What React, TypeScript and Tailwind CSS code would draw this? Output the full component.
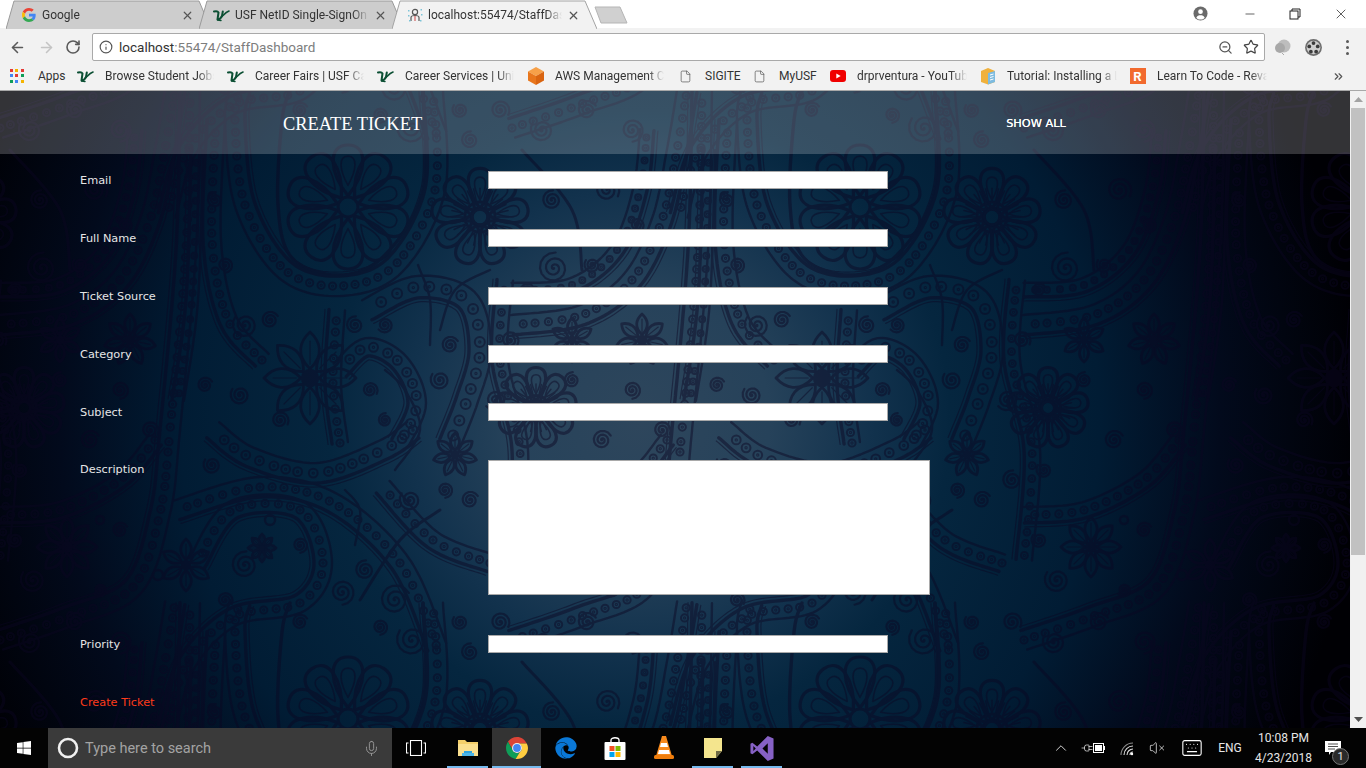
import React from 'react';
import { ArrowLeft, ArrowRight, RotateCw, Info, Star, ZoomOut, X, Minus, File, ChevronUp, Mic, VolumeX, Keyboard, ChevronsRight, Plug } from 'lucide-react';
import { FaEdge, FaWindows } from 'react-icons/fa';

type Pt = [number, number];

// Catmull-Rom sampling so the paisley bands can be given as a few through-points
const sample = (pts: Pt[], step = 8): Pt[] => {
  const out: Pt[] = [];
  for (let i = 0; i < pts.length - 1; i++) {
    const p0 = pts[Math.max(i - 1, 0)];
    const p1 = pts[i];
    const p2 = pts[i + 1];
    const p3 = pts[Math.min(i + 2, pts.length - 1)];
    const n = Math.max(2, Math.ceil(Math.hypot(p2[0] - p1[0], p2[1] - p1[1]) / step));
    for (let j = 0; j < n; j++) {
      const t = j / n;
      const f = (a: number, b: number, c: number, d: number) =>
        0.5 * (2 * b + (c - a) * t + (2 * a - 5 * b + 4 * c - d) * t * t + (3 * b - a - 3 * c + d) * t * t * t);
      out.push([f(p0[0], p1[0], p2[0], p3[0]), f(p0[1], p1[1], p2[1], p3[1])]);
    }
  }
  out.push(pts[pts.length - 1]);
  return out;
};

const toD = (pts: Pt[]) => 'M' + pts.map((p) => `${p[0].toFixed(1)} ${p[1].toFixed(1)}`).join('L');

const offset = (pts: Pt[], w: number): Pt[] =>
  pts.map((p, i) => {
    const a = pts[Math.max(i - 1, 0)];
    const b = pts[Math.min(i + 1, pts.length - 1)];
    const dx = b[0] - a[0];
    const dy = b[1] - a[1];
    const l = Math.hypot(dx, dy) || 1;
    return [p[0] - (dy / l) * w, p[1] + (dx / l) * w] as Pt;
  });

const Band = ({ pts, w = 10, r = 3.6, gap = 10 }: { pts: Pt[]; w?: number; r?: number; gap?: number }) => {
  const line = sample(pts, 4);
  const beads: Pt[] = [];
  let run = 0;
  for (let i = 1; i < line.length; i++) {
    run += Math.hypot(line[i][0] - line[i - 1][0], line[i][1] - line[i - 1][1]);
    if (run >= gap) {
      beads.push(line[i]);
      run = 0;
    }
  }
  return (
    <g>
      <path d={toD(offset(line, w))} strokeWidth={3.4} />
      <path d={toD(offset(line, -w))} strokeWidth={2.4} />
      <path d={toD(offset(line, w + 4))} strokeWidth={1.2} />
      {beads.map((b, i) => (
        <g key={i}>
          <circle cx={b[0]} cy={b[1]} r={r} strokeWidth={2} />
          <circle cx={b[0]} cy={b[1]} r={1.1} strokeWidth={1.2} />
        </g>
      ))}
    </g>
  );
};

const Line = ({ pts, w = 2.4 }: { pts: Pt[]; w?: number }) => <path d={toD(sample(pts, 5))} strokeWidth={w} />;

const Spiral = ({ x, y, r = 10, a = 0 }: { x: number; y: number; r?: number; a?: number }) => {
  const p: Pt[] = [];
  for (let t = 0; t < 40; t++) {
    const th = a + t * 0.42;
    const rr = (r * t) / 40;
    p.push([x + Math.cos(th) * rr, y + Math.sin(th) * rr]);
  }
  return <path d={toD(p)} strokeWidth={2.2} />;
};

const PetalFlower = ({ x, y, r, n = 10 }: { x: number; y: number; r: number; n?: number }) => (
  <g transform={`translate(${x} ${y})`}>
    {Array.from({ length: n }).map((_, i) => (
      <g key={i} transform={`rotate(${(360 / n) * i})`}>
        <path
          d={`M0 ${-r * 0.18}C${-r * 0.3} ${-r * 0.55} ${-r * 0.34} ${-r} 0 ${-r}C${r * 0.34} ${-r} ${r * 0.3} ${-r * 0.55} 0 ${-r * 0.18}Z`}
          strokeWidth={3.2}
        />
        <path
          d={`M0 ${-r * 0.35}C${-r * 0.14} ${-r * 0.6} ${-r * 0.16} ${-r * 0.82} 0 ${-r * 0.82}C${r * 0.16} ${-r * 0.82} ${r * 0.14} ${-r * 0.6} 0 ${-r * 0.35}Z`}
          strokeWidth={1.6}
        />
      </g>
    ))}
    <circle r={r * 0.16} strokeWidth={3} />
  </g>
);

const LeafFlower = ({ x, y, r, n = 8 }: { x: number; y: number; r: number; n?: number }) => (
  <g transform={`translate(${x} ${y})`}>
    {Array.from({ length: n }).map((_, i) => (
      <g key={i} transform={`rotate(${(360 / n) * i})`}>
        <path d={`M0 ${-r * 0.2}C${-r * 0.32} ${-r * 0.5} ${-r * 0.22} ${-r * 0.8} 0 ${-r}C${r * 0.22} ${-r * 0.8} ${r * 0.32} ${-r * 0.5} 0 ${-r * 0.2}Z`} strokeWidth={2.8} />
        <path d={`M0 ${-r * 0.3}L0 ${-r * 0.8}`} strokeWidth={1.2} />
      </g>
    ))}
    <circle r={r * 0.2} fill="rgb(12,6,34)" stroke="none" />
  </g>
);

const Sun = ({ x, y, r }: { x: number; y: number; r: number }) => (
  <g transform={`translate(${x} ${y})`}>
    <circle r={r * 0.24} strokeWidth={4} />
    <circle r={r * 0.42} strokeWidth={3} />
    {Array.from({ length: 28 }).map((_, i) => (
      <path key={i} transform={`rotate(${(360 / 28) * i})`} d={`M0 ${-r * 0.48}L0 ${-r * 0.8}`} strokeWidth={1.5} />
    ))}
    <PetalFlower x={0} y={0} r={r * 1.35} n={9} />
  </g>
);

const fillSpirals: [number, number, number, number][] = [
  [30, 130, 12, 0], [75, 110, 10, 2], [120, 130, 12, 4], [40, 200, 10, 1], [95, 190, 13, 3], [125, 225, 8, 5],
  [15, 290, 7, 2], [80, 265, 8, 0], [215, 200, 8, 1], [225, 265, 8, 4], [205, 385, 8, 2], [240, 395, 10, 0],
  [280, 420, 9, 3], [355, 325, 9, 1], [385, 325, 8, 5], [450, 345, 9, 2], [440, 380, 10, 0], [370, 390, 8, 3],
  [385, 420, 7, 1], [445, 490, 8, 4], [410, 500, 11, 0], [470, 500, 9, 2], [500, 480, 10, 1], [510, 340, 9, 3],
  [495, 400, 11, 5], [20, 470, 8, 0], [90, 440, 10, 2], [120, 390, 9, 4], [60, 380, 8, 1], [225, 600, 8, 3],
  [365, 570, 10, 1], [300, 545, 8, 4], [120, 530, 8, 2], [15, 540, 8, 0], [100, 590, 7, 5], [470, 140, 9, 1],
  [500, 110, 10, 3], [460, 110, 8, 0], [300, 110, 8, 2], [380, 115, 8, 4],
];

// one 512px repeat of the wallpaper, in page coordinates
const PaisleyTile = () => (
  <g fill="none" stroke="rgb(12,6,34)" strokeLinecap="round" strokeLinejoin="round">
    <PetalFlower x={348} y={207} r={62} />
    <Line pts={[[423, 91], [423, 190], [385, 255], [340, 275], [292, 258], [278, 205], [282, 120], [290, 91]]} w={3.4} />
    <Band pts={[[433, 91], [435, 190], [395, 265], [340, 286], [285, 270], [245, 205], [235, 120], [240, 91]]} />
    <Sun x={480} y={217} r={36} />
    <LeafFlower x={310} y={378} r={46} />
    <Sun x={24} y={408} r={30} />
    <LeafFlower x={67} y={547} r={30} />
    <LeafFlower x={130} y={340} r={26} n={7} />
    <LeafFlower x={262} y={548} r={14} />
    <LeafFlower x={186} y={565} r={26} n={6} />
    <LeafFlower x={60} y={340} r={22} n={6} />
    <LeafFlower x={455} y={455} r={22} n={7} />
    <Band pts={[[0, 325], [70, 315], [120, 280], [150, 220], [165, 150], [175, 91]]} />
    <Band pts={[[0, 290], [60, 285], [105, 250], [128, 190], [135, 130]]} w={7} r={3} gap={9} />
    <Band pts={[[190, 91], [186, 250], [170, 430], [160, 513], [133, 587], [67, 617], [0, 640]]} />
    <Band pts={[[0, 515], [60, 510], [120, 480], [155, 440]]} w={8} />
    <Band pts={[[177, 510], [260, 487], [333, 503], [400, 563], [437, 647]]} />
    <Band pts={[[197, 563], [233, 510], [300, 510], [323, 563], [300, 603], [233, 617], [187, 663], [167, 727]]} w={9} />
    <Band pts={[[213, 430], [250, 457], [317, 473], [383, 450], [413, 430]]} r={4.4} gap={12} />
    <Band pts={[[383, 487], [433, 540], [490, 563]]} w={9} />
    <Band pts={[[367, 310], [417, 287], [467, 300], [480, 350], [467, 400], [450, 443]]} r={5} gap={15} w={11} />
    <Band pts={[[340, 370], [367, 347], [400, 363], [417, 403], [400, 443]]} r={4.5} gap={12} w={9} />
    <Band pts={[[337, 310], [333, 383], [340, 443]]} w={8} />
    <Band pts={[[216, 120], [212, 240], [228, 320], [262, 360]]} w={9} />
    <Band pts={[[197, 150], [192, 300], [178, 400]]} w={6} r={3} gap={10} />
    <Band pts={[[505, 280], [500, 360], [520, 450], [512, 560]]} w={8} r={3.4} />
    <Line pts={[[440, 330], [455, 290], [490, 270]]} />
    <Line pts={[[430, 345], [430, 300], [418, 265]]} />
    <Line pts={[[395, 470], [420, 430], [405, 390], [385, 370]]} />
    <Line pts={[[355, 545], [360, 510], [345, 490]]} />
    <Line pts={[[10, 150], [60, 210], [70, 270]]} w={3} />
    <Line pts={[[360, 600], [400, 540], [440, 510]]} w={3} />
    <Spiral x={245} y={325} r={13} />
    <Spiral x={270} y={320} r={9} a={2} />
    <Spiral x={42} y={268} r={16} a={1} />
    <Spiral x={33} y={580} r={13} />
    <Spiral x={395} y={600} r={16} a={2} />
    <Spiral x={342} y={592} r={13} a={4} />
    <Spiral x={245} y={565} r={14} a={1} />
    <Spiral x={212} y={465} r={9} />
    <Spiral x={150} y={430} r={9} a={3} />
    <Spiral x={412} y={640} r={16} />
    {fillSpirals.map(([x, y, r, a], i) => (
      <Spiral key={i} x={x} y={y} r={r} a={a} />
    ))}
    <circle cx={270} cy={520} r={5} strokeWidth={2.4} />
    <circle cx={158} cy={575} r={5} strokeWidth={2.4} />
    <circle cx={100} cy={520} r={4} strokeWidth={2.4} />
  </g>
);

const PaisleyWall = () => {
  const offsets = [-512, 0, 512, 1024];
  return (
    <svg className="absolute inset-0 h-full w-full" viewBox="0 91 1350 637" preserveAspectRatio="none" opacity={0.45}>
      <defs>
        <g id="tile">
          <PaisleyTile />
        </g>
      </defs>
      {offsets.map((dx) => [-512, 0, 512].map((dy) => <use key={`${dx}_${dy}`} href="#tile" x={dx} y={dy} />))}
    </svg>
  );
};

const UsfIcon = () => (
  <svg viewBox="0 0 17 14" className="h-[14px] w-[17px]" fill="none" stroke="#0b4f33" strokeLinecap="round" strokeLinejoin="round">
    <path d="M1 3.500C3 3 5 3.500 5.500 4.500L4.500 11.500C6.500 11.500 8 10 9 8L9.800 3.500" strokeWidth="2" />
    <path d="M9 8.500C11 6.500 13 4 16 3" strokeWidth="1.600" />
    <path d="M4.500 12L8 12.500" strokeWidth="1.400" />
  </svg>
);

const GoogleIcon = () => (
  <svg viewBox="0 0 48 48" className="h-[14px] w-[14px]">
    <path fill="#EA4335" d="M24 9.5c3.5 0 6.7 1.3 9.2 3.6l6.9-6.9C35.9 2.4 30.4 0 24 0 14.6 0 6.5 5.4 2.6 13.2l8 6.2C12.5 13.7 17.8 9.5 24 9.5z" />
    <path fill="#4285F4" d="M46.9 24.5c0-1.6-.1-3.1-.4-4.5H24v9h12.9c-.6 3-2.2 5.5-4.8 7.2l7.7 6c4.500-4.200 7.100-10.300 7.100-17.700z" />
    <path fill="#FBBC05" d="M10.500 28.600c-.5-1.400-.8-3-.8-4.600s.3-3.200.8-4.600l-8-6.200C.9 16.500 0 20.100 0 24s.9 7.500 2.600 10.800l7.900-6.200z" />
    <path fill="#34A853" d="M24 48c6.500 0 11.900-2.100 15.900-5.800l-7.700-6c-2.200 1.400-4.900 2.300-8.200 2.300-6.200 0-11.500-4.200-13.400-9.900l-8 6.200C6.500 42.600 14.600 48 24 48z" />
  </svg>
);

const LocalFavicon = () => (
  <svg viewBox="0 0 16 16" className="h-[16px] w-[16px]">
    <circle cx="8" cy="5" r="2.6" fill="none" stroke="#555" strokeWidth="1.2" />
    <path d="M4 14V10.500C4 9 6 8.500 8 8.500S12 9 12 10.500V14" fill="none" stroke="#555" strokeWidth="1.2" />
    <path d="M8 9V14" stroke="#c44" strokeWidth="1" />
    <g fill="#7cc4d8">
      <rect x="1" y="3" width="1.500" height="1.500" />
      <rect x="13.500" y="2" width="1.500" height="1.500" />
      <rect x="1" y="8" width="1.500" height="1.500" />
      <rect x="14" y="7" width="1.500" height="1.500" />
      <rect x="2" y="13" width="1.500" height="1.500" />
      <rect x="13" y="13" width="1.500" height="1.500" />
    </g>
  </svg>
);

const ChromeIcon = ({ size = 24 }: { size?: number }) => (
  <svg viewBox="0 0 48 48" width={size} height={size}>
    <path fill="#DB4437" d="M24 2C16.500 2 9.800 5.800 5.900 11.600L14 25.500C14.700 20.300 18.900 15 24 15H43.500C39.900 7.400 32.600 2 24 2Z" />
    <path fill="#0F9D58" d="M5.900 11.600C3.400 15.300 2 19.500 2 24C2 35.200 10.400 44.500 21.300 45.800L29.400 32.500C27.800 33.400 25.900 34 24 34C19 34 14.900 30.300 14 25.500Z" />
    <path fill="#FFCD40" d="M43.500 15H24C29.500 15 34 19.500 34 24C34 27.200 32.200 30.800 29.400 32.500L21.300 45.800C22.200 45.900 23.100 46 24 46C36.200 46 46 36.200 46 24C46 20.800 45.100 17.700 43.500 15Z" />
    <circle cx="24" cy="24" r="10" fill="#f1f1f1" />
    <circle cx="24" cy="24" r="7.800" fill="#4285F4" />
  </svg>
);

const tabs = [
  { title: 'Google', icon: <GoogleIcon />, pad: 'pl-[14px]', gap: 'ml-[5px]' },
  { title: 'USF NetID Single-SignOn', icon: <UsfIcon />, pad: 'pl-[14px]', gap: 'ml-[5px]' },
  { title: 'localhost:55474/StaffDashboard', icon: <LocalFavicon />, pad: 'pl-[14px]', gap: 'ml-[5px]', active: true },
];

const TabStrip = () => (
  <div className="flex h-[28px] items-end bg-white pl-[6px]">
    {tabs.map((t, i) => (
      <div key={t.title} className={`relative flex h-[28px] w-[205px] items-center pt-[2px] ${t.pad} ${i > 0 ? '-ml-[12px]' : ''} ${t.active ? 'z-10' : ''}`}>
        <svg className="absolute inset-0" width="205" height="29" viewBox="0 0 205 29">
          <path d="M0 29L8 1H193L205 29" fill={t.active ? '#f2f2f2' : '#cdcdcd'} stroke={t.active ? '#a3a3a3' : '#9a9a9a'} strokeWidth="1" />
        </svg>
        <div className="relative flex w-[17px] shrink-0 justify-center">{t.icon}</div>
        <span className={`relative ${t.gap} w-[134px] overflow-hidden whitespace-nowrap text-[12px] text-[#333] [mask-image:linear-gradient(to_right,black_88%,transparent)]`}>{t.title}</span>
        <X className="relative ml-[5px] h-[13px] w-[13px] text-[#555]" strokeWidth={2.200} />
      </div>
    ))}
    <svg width="36" height="19" viewBox="0 0 36 19" className="mb-[3px] -ml-[4px]">
      <path d="M2 1H27L34 17H8Z" fill="#d0d0d0" stroke="#b5b5b5" />
    </svg>
    <div className="ml-auto flex h-full items-center pb-[1px]">
      <svg viewBox="0 0 16 16" className="mr-[34px] h-[15px] w-[15px]">
        <circle cx="8" cy="8" r="7.500" fill="#6a6a6a" />
        <circle cx="8" cy="6" r="2.500" fill="#fff" />
        <path d="M3.500 12.500C4.500 10.300 6 9.800 8 9.800S11.500 10.300 12.500 12.500C11.500 13.800 10 14.500 8 14.500S4.500 13.800 3.500 12.500Z" fill="#fff" />
      </svg>
      <Minus className="mr-[31px] h-[14px] w-[16px] text-[#222]" strokeWidth={1.200} />
      <svg viewBox="0 0 12 12" className="mr-[32px] h-[12px] w-[12px]" fill="none" stroke="#222">
        <path d="M3 3V1H11V9H9" />
        <rect x="1" y="3" width="8" height="8" />
      </svg>
      <X className="mr-[17px] h-[16px] w-[16px] text-[#222]" strokeWidth={1.100} />
    </div>
  </div>
);

const Toolbar = () => (
  <div className="flex h-[34px] items-center bg-[#f2f2f2] pl-[9px] pt-[4px]">
    <ArrowLeft className="h-[17px] w-[17px] text-[#5a5a5a]" strokeWidth={2.200} />
    <ArrowRight className="ml-[12px] h-[17px] w-[17px] text-[#c4c4c4]" strokeWidth={2.200} />
    <RotateCw className="ml-[10px] h-[16px] w-[16px] text-[#5a5a5a]" strokeWidth={2.400} />
    <div className="ml-[11px] flex h-[28px] w-[1173px] items-center rounded-[2px] border border-[#a9a9a9] bg-white pl-[6px]">
      <Info className="h-[14px] w-[14px] text-[#555]" strokeWidth={2} />
      <span className="ml-[6px] whitespace-nowrap text-[13.5px] text-[#333]">
        localhost<span className="text-[#7d7d7d]">:55474/StaffDashboard</span>
      </span>
      <ZoomOut className="ml-auto h-[15px] w-[15px] text-[#555]" strokeWidth={2} />
      <Star className="ml-[10px] mr-[5px] h-[16px] w-[16px] text-[#444]" strokeWidth={1.800} />
    </div>
    <svg viewBox="0 0 18 18" className="ml-[9px] h-[18px] w-[18px]">
      <circle cx="10" cy="8" r="6.500" fill="#bdbdbd" />
      <circle cx="6" cy="10" r="5" fill="#a8a8a8" />
      <path d="M8 15L10 17" stroke="#aaa" />
    </svg>
    <svg viewBox="0 0 18 18" className="ml-[12px] h-[19px] w-[19px]">
      <circle cx="9" cy="9" r="8" fill="#6e6e6e" />
      <circle cx="9" cy="9" r="6.500" fill="#cfcfcf" />
      <g fill="#3b3b3b">
        <circle cx="9" cy="4.800" r="1.800" />
        <circle cx="5" cy="8" r="1.800" />
        <circle cx="13" cy="8" r="1.800" />
        <circle cx="6.500" cy="13" r="1.800" />
        <circle cx="11.500" cy="13" r="1.800" />
      </g>
    </svg>
    <div className="ml-[23px] flex flex-col gap-[3px]">
      <span className="h-[3px] w-[3px] rounded-full bg-[#5a5a5a]" />
      <span className="h-[3px] w-[3px] rounded-full bg-[#5a5a5a]" />
      <span className="h-[3px] w-[3px] rounded-full bg-[#5a5a5a]" />
    </div>
  </div>
);

const AppsIcon = () => (
  <div className="grid h-[14px] w-[14px] grid-cols-3 gap-[2px]">
    {['#e53935', '#f4b400', '#e53935', '#4285f4', '#e53935', '#0f9d58', '#0f9d58', '#4285f4', '#f4b400'].map((c, i) => (
      <svg key={i} viewBox="0 0 4 4" className="h-[3px] w-[3px]">
        <rect width="4" height="4" fill={c} />
      </svg>
    ))}
  </div>
);

const CubeIcon = () => (
  <svg viewBox="0 0 16 18" className="h-[18px] w-[16px]">
    <path d="M8 0L16 4.500L8 9L0 4.500Z" fill="#f7a048" />
    <path d="M0 4.500L8 9V18L0 13.500Z" fill="#e8761c" />
    <path d="M16 4.500L8 9V18L16 13.500Z" fill="#d96410" />
  </svg>
);

const YouTubeIcon = () => (
  <svg viewBox="0 0 16 12" className="h-[12px] w-[16px]">
    <rect width="16" height="12" rx="3" fill="#f00000" />
    <path d="M6.300 3.500L10.700 6L6.300 8.500Z" fill="#fff" />
  </svg>
);

const BoxIcon = () => (
  <svg viewBox="0 0 16 18" className="h-[18px] w-[16px]">
    <path d="M1 4L8 1L15 4V15L8 17.500L1 15Z" fill="#f0b13c" />
    <path d="M8 6L15 4V15L8 17.500Z" fill="#7dbbe0" />
    <path d="M10 8L13.500 7M10 10.500L13.500 9.500M10 13L13.500 12" stroke="#fff" strokeWidth="1" />
  </svg>
);

const bookmarks: { label: string; icon: React.ReactNode; w: string; text: string; fade?: boolean }[] = [
  { label: 'Browse Student Jobs', icon: <UsfIcon />, w: 'w-[150px]', text: 'w-[109px]', fade: true },
  { label: 'Career Fairs | USF Career Services', icon: <UsfIcon />, w: 'w-[150px]', text: 'w-[109px]', fade: true },
  { label: 'Career Services | University', icon: <UsfIcon />, w: 'w-[150px]', text: 'w-[109px]', fade: true },
  { label: 'AWS Management Console', icon: <CubeIcon />, w: 'w-[150px]', text: 'w-[109px]', fade: true },
  { label: 'SIGITE', icon: <File className="h-[15px] w-[13px] text-[#555]" strokeWidth={1.300} />, w: 'w-[74px]', text: 'w-[40px]' },
  { label: 'MyUSF', icon: <File className="h-[15px] w-[13px] text-[#555]" strokeWidth={1.300} />, w: 'w-[78px]', text: 'w-[40px]' },
  { label: 'drprventura - YouTube', icon: <YouTubeIcon />, w: 'w-[150px]', text: 'w-[110px]', fade: true },
  { label: 'Tutorial: Installing a LAMP', icon: <BoxIcon />, w: 'w-[150px]', text: 'w-[110px]', fade: true },
  {
    label: 'Learn To Code - Revature',
    icon: <span className="flex h-[16px] w-[16px] items-center justify-center bg-[#f26a2e] text-[13px] font-bold leading-none text-white">R</span>,
    w: 'w-[150px]',
    text: 'w-[110px]',
    fade: true,
  },
];

const BookmarkBar = () => (
  <div className="flex h-[29px] items-center border-b border-[#a8a8a8] bg-[#f2f2f2] pl-[10px] text-[12px] text-[#333]">
    <div className="flex w-[67px] items-center">
      <AppsIcon />
      <span className="ml-[14px]">Apps</span>
    </div>
    {bookmarks.map((b) => (
      <div key={b.label} className={`flex items-center ${b.w}`}>
        <div className="flex w-[17px] shrink-0 justify-center">{b.icon}</div>
        <span className={`ml-[11px] overflow-hidden whitespace-nowrap ${b.text} ${b.fade ? '[mask-image:linear-gradient(to_right,black_85%,transparent)]' : ''}`}>{b.label}</span>
      </div>
    ))}
    <ChevronsRight className="ml-[53px] h-[13px] w-[13px] text-[#555]" strokeWidth={2.200} />
  </div>
);

const fields = ['Email', 'Full Name', 'Ticket Source', 'Category', 'Subject'];

const Field = ({ label }: { label: string }) => (
  <div className="flex h-[58px] items-start">
    <label className="w-[408px] pt-[2px] leading-[16px]">{label}</label>
    <input className="h-[18px] w-[400px] border border-[#a9a9a9] bg-white" />
  </div>
);

const TicketForm = () => (
  <div className="relative pl-[80px] pt-[17px] text-[11.3px] text-[#e6e6e6] [font-family:'DejaVu_Sans',Verdana,sans-serif]">
    {fields.map((f) => (
      <Field key={f} label={f} />
    ))}
    <div className="flex h-[174px] items-start">
      <label className="w-[408px] pt-[1px] leading-[16px]">Description</label>
      <textarea className="-mt-[1px] h-[135px] w-[442px] resize-none border border-[#a9a9a9] bg-white" />
    </div>
    <Field label="Priority" />
    <a className="block pt-[2px] leading-[16px] text-[#ff3b1a]">Create Ticket</a>
  </div>
);

const Scrollbar = () => (
  <div className="flex w-[16px] flex-col items-center bg-[#f1f1f1]">
    <svg viewBox="0 0 9 5" className="mt-[6px] h-[5px] w-[9px]">
      <path d="M4.500 0L9 5H0Z" fill="#a3a3a3" />
    </svg>
    <div className="mt-[6px] h-[447px] w-[14px] bg-[#c1c1c1]" />
    <svg viewBox="0 0 9 5" className="mb-[6px] mt-auto h-[5px] w-[9px]">
      <path d="M0 0H9L4.500 5Z" fill="#505050" />
    </svg>
  </div>
);

const Folder = () => (
  <svg viewBox="0 0 22 20" className="h-[20px] w-[22px]">
    <path d="M1 2H8L10 4H21V18H1Z" fill="#f4cf6a" />
    <path d="M1 6H21V18H1Z" fill="#fbe08f" />
    <path d="M7 18V13H15V18H13V15H9V18Z" fill="#2ea3e0" />
    <rect x="5" y="15" width="12" height="3" fill="#4db5e8" />
  </svg>
);

const StoreIcon = () => (
  <svg viewBox="0 0 22 24" className="h-[24px] w-[22px]">
    <path d="M7 6V4C7 1 15 1 15 4V6" fill="none" stroke="#fff" strokeWidth="1.300" />
    <rect x="0.500" y="6" width="21" height="18" rx="1" fill="#fff" />
    <rect x="5.500" y="10" width="5" height="5" fill="#f25022" />
    <rect x="11.500" y="10" width="5" height="5" fill="#7fba00" />
    <rect x="5.500" y="16" width="5" height="5" fill="#00a4ef" />
    <rect x="11.500" y="16" width="5" height="5" fill="#ffb900" />
  </svg>
);

const VlcIcon = () => (
  <svg viewBox="0 0 22 24" className="h-[24px] w-[22px]">
    <path d="M11 0L13 0L19 20H3L9 0Z" fill="#f78a1d" />
    <path d="M8 7H14L15 11H7Z" fill="#fff" />
    <path d="M6 14H16L17 18H5Z" fill="#fff" />
    <rect x="1" y="19" width="20" height="4" rx="1.500" fill="#ef7d0c" />
  </svg>
);

const StickyIcon = () => (
  <svg viewBox="0 0 18 20" className="h-[20px] w-[18px]">
    <path d="M0 0H18V13L12 20H0Z" fill="#f4e58e" />
    <path d="M18 13H12V20Z" fill="#6f6a45" />
  </svg>
);

const VsIcon = () => (
  <svg viewBox="0 0 24 26" className="h-[25px] w-[24px]">
    <path d="M18 0L24 2.500V23.500L18 26L7 15L2 19L0 18V8L2 7L7 11ZM18 7.500L12.500 13L18 18.500ZM3 10.500V15.500L5.500 13Z" fill="#8661c5" />
  </svg>
);

const WifiIcon = () => (
  <svg viewBox="0 0 16 16" className="h-[16px] w-[16px]" fill="none" stroke="#dcdcdc" strokeWidth="1.100">
    <path d="M3 15A12 12 0 0 1 15 3" stroke="#8a8a8a" />
    <path d="M6 15A9 9 0 0 1 15 6" />
    <path d="M9 15A6 6 0 0 1 15 9" />
    <path d="M12 15A3 3 0 0 1 15 12" />
    <circle cx="14" cy="14" r="1.200" fill="#fff" stroke="none" />
  </svg>
);

const taskIcons = [
  { node: <Folder />, on: true },
  { node: <ChromeIcon />, on: true, active: true },
  { node: <FaEdge className="h-[24px] w-[22px] text-[#0a78d7]" /> },
  { node: <StoreIcon /> },
  { node: <VlcIcon /> },
  { node: <StickyIcon />, on: true },
  { node: <VsIcon />, on: true },
];

const Taskbar = () => (
  <div className="flex h-[40px] items-stretch bg-[#030303] text-white">
    <div className="flex w-[48px] items-center justify-center">
      <FaWindows className="h-[16px] w-[16px]" />
    </div>
    <div className="flex w-[344px] items-center bg-[#3a3a3a] pl-[9px]">
      <svg viewBox="0 0 22 22" className="h-[22px] w-[22px]">
        <circle cx="11" cy="11" r="9" fill="none" stroke="#f0f0f0" strokeWidth="2.600" />
      </svg>
      <span className="ml-[6px] pt-[2px] text-[14.5px] text-[#a3a3a3]">Type here to search</span>
      <Mic className="ml-auto mr-[12px] h-[17px] w-[17px] text-[#9a9a9a]" strokeWidth={1.300} />
    </div>
    <div className="flex w-[48px] items-center justify-center">
      <svg viewBox="0 0 20 16" className="h-[16px] w-[20px]" fill="none" stroke="#fff" strokeWidth="1.100">
        <rect x="4.500" y="0.500" width="11" height="15" />
        <path d="M2.500 3H0.500V13H2.500M17.500 3H19.500V13H17.500" />
      </svg>
    </div>
    <div className="flex pl-[3px]">
      {taskIcons.map((t, i) => (
        <div key={i} className={`relative flex w-[49px] items-center justify-center ${t.active ? 'bg-[#333333]' : ''}`}>
          {t.node}
          {t.on && <span className={`absolute bottom-0 h-[2px] bg-[#76b9ed] ${t.active ? 'inset-x-0' : 'inset-x-[4px]'}`} />}
        </div>
      ))}
    </div>
    <div className="ml-auto flex items-center text-[#e6e6e6]">
      <div className="flex w-[32px] justify-center">
        <ChevronUp className="h-[18px] w-[18px]" strokeWidth={1.200} />
      </div>
      <div className="flex w-[32px] items-center justify-center">
        <Plug className="h-[12px] w-[12px] rotate-90" strokeWidth={1.500} />
        <svg viewBox="0 0 12 10" className="h-[10px] w-[12px]">
          <rect x="0.500" y="0.500" width="10" height="9" fill="none" stroke="#fff" />
          <rect x="2" y="2" width="7" height="6" fill="#fff" />
          <rect x="11" y="3" width="1" height="4" fill="#fff" />
        </svg>
      </div>
      <div className="flex w-[34px] justify-center">
        <WifiIcon />
      </div>
      <div className="flex w-[28px] justify-center">
        <VolumeX className="h-[16px] w-[16px]" strokeWidth={1.200} />
      </div>
      <div className="flex w-[42px] justify-center">
        <Keyboard className="h-[22px] w-[24px] text-white" strokeWidth={1.200} />
      </div>
      <div className="flex w-[34px] justify-center text-[12px]">ENG</div>
      <div className="flex w-[73px] flex-col items-center text-[12px] leading-[20px]">
        <span>10:08 PM</span>
        <span>4/23/2018</span>
      </div>
      <div className="relative mr-[20px] flex w-[26px] justify-center">
        <svg viewBox="0 0 16 15" className="h-[15px] w-[16px]">
          <path d="M0 0H16V11H6L4 14V11H0Z" fill="#fff" />
          <path d="M3 3H13M3 5.500H13M3 8H10" stroke="#222" strokeWidth="0.800" />
        </svg>
        <span className="absolute -bottom-[9px] right-[-3px] flex h-[17px] w-[17px] items-center justify-center rounded-full border border-[#777] bg-[#2a2a2a] text-[11px] leading-none">1</span>
      </div>
    </div>
  </div>
);

export default function App() {
  return (
    <div className="flex h-[768px] w-[1366px] flex-col overflow-hidden [font-family:Roboto,sans-serif]">
      <TabStrip />
      <Toolbar />
      <BookmarkBar />
      <div className="flex h-[637px]">
        <main className="relative flex-1 overflow-hidden bg-[radial-gradient(circle_at_640px_329px,#2e465c_0,#26425a_130px,#12324d_230px,#05263f_310px,#011c34_460px,#020a1c_580px,#000004_720px)]">
          <PaisleyWall />
          <header className="relative flex h-[63px] items-center bg-white/20 pl-[283px] pt-[4px]">
            <h1 className="text-[18.4px] leading-none text-white [font-family:'Liberation_Serif',Georgia,serif]">CREATE TICKET</h1>
            <a className="ml-[584px] text-[11.3px] text-white [font-family:'DejaVu_Sans',Verdana,sans-serif] [text-shadow:0_0_0.6px_white]">SHOW ALL</a>
          </header>
          <TicketForm />
        </main>
        <Scrollbar />
      </div>
      <Taskbar />
    </div>
  );
}
